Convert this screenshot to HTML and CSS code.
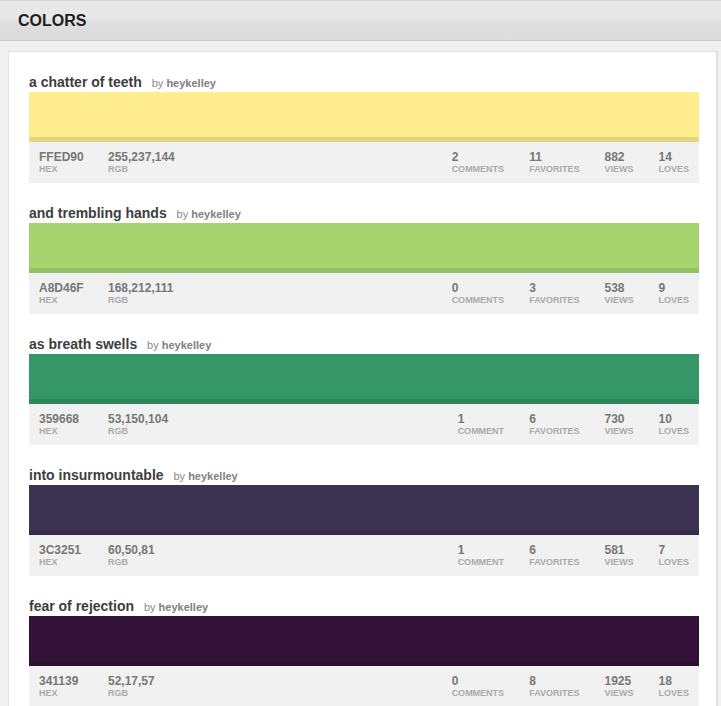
FILE: index.html
```html
<!DOCTYPE html>
<html>
<head>
<meta charset="utf-8">
<title>Colors</title>
<link rel="stylesheet" href="styles.css">
</head>
<body>
<header class="topbar"><h1 class="topbar-title">COLORS</h1></header>
<main class="page">
  <section class="card">
    <article class="color">
      <h2 class="color-title">a chatter of teeth <span class="by">by <b>heykelley</b></span></h2>
      <div class="swatch" style="background:#FFED90"></div>
      <div class="stats">
        <div class="stat hex"><span class="val">FFED90</span><span class="lbl">HEX</span></div>
        <div class="stat"><span class="val">255,237,144</span><span class="lbl">RGB</span></div>
        <div class="stat right"><span class="val">2</span><span class="lbl">COMMENTS</span></div>
        <div class="stat"><span class="val">11</span><span class="lbl">FAVORITES</span></div>
        <div class="stat"><span class="val">882</span><span class="lbl">VIEWS</span></div>
        <div class="stat"><span class="val">14</span><span class="lbl">LOVES</span></div>
      </div>
    </article>
    <article class="color">
      <h2 class="color-title">and trembling hands <span class="by">by <b>heykelley</b></span></h2>
      <div class="swatch" style="background:#A8D46F"></div>
      <div class="stats">
        <div class="stat hex"><span class="val">A8D46F</span><span class="lbl">HEX</span></div>
        <div class="stat"><span class="val">168,212,111</span><span class="lbl">RGB</span></div>
        <div class="stat right"><span class="val">0</span><span class="lbl">COMMENTS</span></div>
        <div class="stat"><span class="val">3</span><span class="lbl">FAVORITES</span></div>
        <div class="stat"><span class="val">538</span><span class="lbl">VIEWS</span></div>
        <div class="stat"><span class="val">9</span><span class="lbl">LOVES</span></div>
      </div>
    </article>
    <article class="color">
      <h2 class="color-title">as breath swells <span class="by">by <b>heykelley</b></span></h2>
      <div class="swatch" style="background:#359668"></div>
      <div class="stats">
        <div class="stat hex"><span class="val">359668</span><span class="lbl">HEX</span></div>
        <div class="stat"><span class="val">53,150,104</span><span class="lbl">RGB</span></div>
        <div class="stat right"><span class="val">1</span><span class="lbl">COMMENT</span></div>
        <div class="stat"><span class="val">6</span><span class="lbl">FAVORITES</span></div>
        <div class="stat"><span class="val">730</span><span class="lbl">VIEWS</span></div>
        <div class="stat"><span class="val">10</span><span class="lbl">LOVES</span></div>
      </div>
    </article>
    <article class="color">
      <h2 class="color-title">into insurmountable <span class="by">by <b>heykelley</b></span></h2>
      <div class="swatch" style="background:#3C3251"></div>
      <div class="stats">
        <div class="stat hex"><span class="val">3C3251</span><span class="lbl">HEX</span></div>
        <div class="stat"><span class="val">60,50,81</span><span class="lbl">RGB</span></div>
        <div class="stat right"><span class="val">1</span><span class="lbl">COMMENT</span></div>
        <div class="stat"><span class="val">6</span><span class="lbl">FAVORITES</span></div>
        <div class="stat"><span class="val">581</span><span class="lbl">VIEWS</span></div>
        <div class="stat"><span class="val">7</span><span class="lbl">LOVES</span></div>
      </div>
    </article>
    <article class="color">
      <h2 class="color-title">fear of rejection <span class="by">by <b>heykelley</b></span></h2>
      <div class="swatch" style="background:#341139"></div>
      <div class="stats">
        <div class="stat hex"><span class="val">341139</span><span class="lbl">HEX</span></div>
        <div class="stat"><span class="val">52,17,57</span><span class="lbl">RGB</span></div>
        <div class="stat right"><span class="val">0</span><span class="lbl">COMMENTS</span></div>
        <div class="stat"><span class="val">8</span><span class="lbl">FAVORITES</span></div>
        <div class="stat"><span class="val">1925</span><span class="lbl">VIEWS</span></div>
        <div class="stat"><span class="val">18</span><span class="lbl">LOVES</span></div>
      </div>
    </article>
  </section>
</main>
</body>
</html>
```

FILE: styles.css
```css
html, body {
  margin: 0;
  padding: 0;
}
body {
  background: #f0f0f0;
  font-family: "Liberation Sans", Arial, sans-serif;
  overflow: hidden;
}
.topbar {
  border-top: 1px solid #d6d6d6;
  border-bottom: 1px solid #c8c8c8;
  box-sizing: border-box;
  height: 41px;
  background: linear-gradient(#e9e9e9 0%, #e7e7e7 45%, #dedede 55%, #dcdcdc 100%);
  padding-left: 18px;
}
.topbar-title {
  margin: 0;
  font-size: 16px;
  line-height: 39px;
  font-weight: bold;
  color: #1e1e1e;
}
.page {
  padding: 10px 3px 0 8px;
}
.card {
  background: #fff;
  border: 1px solid #e2e2e2;
  border-right: 2px solid #e0e0e0;
  padding: 22px 17px 10px 20px;
}
.color {
  margin-bottom: 22px;
}
.color-title {
  margin: 0 0 2px 0;
  font-size: 14px;
  line-height: 16px;
  height: 16px;
  font-weight: bold;
  color: #3d3d3d;
}
.by {
  margin-left: 6px;
  font-size: 11px;
  line-height: 1;
  font-weight: normal;
  color: #888;
}
.by b {
  font-weight: bold;
  color: #808080;
}
.swatch {
  height: 50px;
  box-shadow: inset 0 -5px 0 rgba(0, 0, 0, 0.1);
}
.stats {
  display: flex;
  background: #f1f1f1;
  padding: 8px 10px 8px 10px;
  gap: 25px;
}
.stat {
  display: flex;
  flex-direction: column;
}
.stat.hex {
  width: 44px;
}
.stat.right {
  margin-left: auto;
}
.val {
  font-size: 12px;
  line-height: 14px;
  font-weight: bold;
  color: #777;
  white-space: nowrap;
}
.lbl {
  font-size: 9px;
  line-height: 11px;
  font-weight: bold;
  color: #aaa;
  white-space: nowrap;
}
```
